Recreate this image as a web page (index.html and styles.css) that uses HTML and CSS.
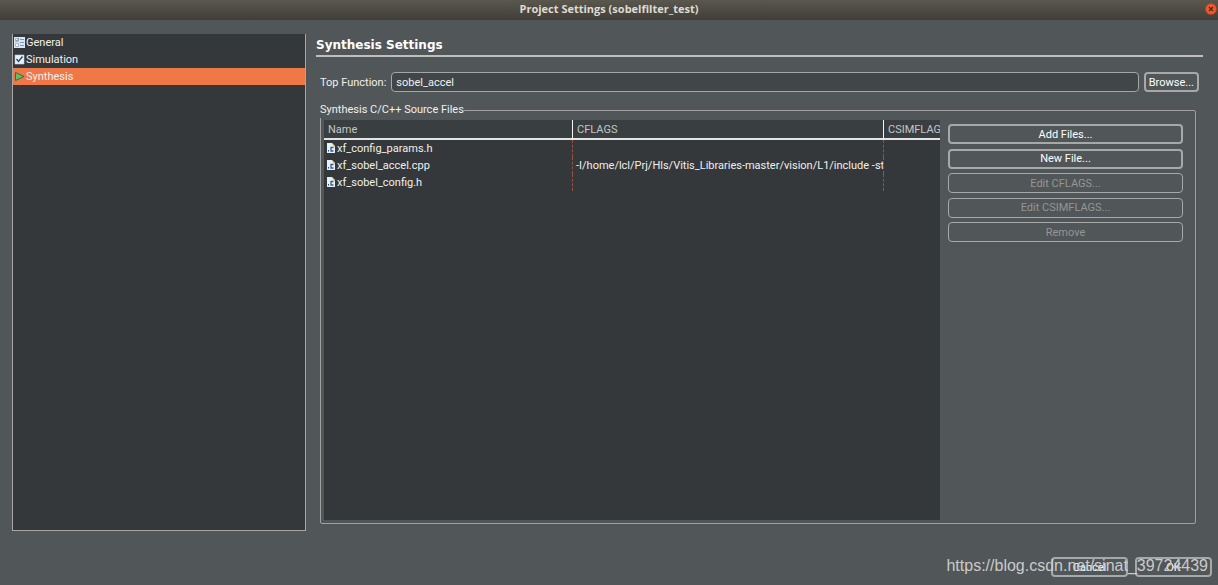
FILE: index.html
```html
<!DOCTYPE html>
<html lang="en">
<head>
<meta charset="utf-8">
<title>Project Settings (sobelfilter_test)</title>
<link rel="stylesheet" href="styles.css">
</head>
<body>
<svg class="defs" aria-hidden="true">
  <symbol id="c-file" viewBox="0 0 8 10">
    <path d="M0 0h5l3 3v7H0z" fill="#e9f0f7"/>
    <path d="M4.500 0h.5l3 3v1.500z" fill="#d9a84a"/>
    <path d="M1 7h1v1.500H1z" fill="#234f82"/>
    <path d="M6.500 4.500H4v3.500h2.500" fill="none" stroke="#2d6299" stroke-width="1.300"/>
  </symbol>
</svg>
<header class="titlebar">
  <h1 class="titlebar-text">Project Settings (sobelfilter_test)</h1>
  <button class="close" type="button" aria-label="Close">
    <svg viewBox="0 0 12 12" width="12" height="12"><circle cx="6" cy="6" r="5.5" fill="#f0592b" stroke="#b8401e" stroke-width=".6"/><path d="M4 4l4 4M8 4l-4 4" stroke="#4b2519" stroke-width="1.2"/></svg>
  </button>
</header>
<main class="dialog">
  <nav class="sidebar">
    <a class="nav-item" href="#general">
      <svg class="nav-icon" viewBox="0 0 11 11"><path d="M0 0h11v11H0z" fill="#dbe6f0"/><path d="M1.500 1.500h3v3h-3zM1.500 6.500h3v3h-3z" fill="#f5f9fc" stroke="#8fa9c2" stroke-width=".8"/><path d="M2 3l1 1 2-3M6 2.500h4M6 5.500h4M6 8.500h4" fill="none" stroke="#6583a5" stroke-width=".8"/></svg>
      <span class="nav-label">General</span></a>
    <a class="nav-item" href="#simulation">
      <svg class="nav-icon" viewBox="0 0 11 11"><path d="M1 1h9v9H1z" fill="#e9f2fa" stroke="#b9cbe0" stroke-width=".6"/><path d="M2.500 5l2 2.500 4-5" fill="none" stroke="#26466e" stroke-width="1.400"/></svg>
      <span class="nav-label">Simulation</span></a>
    <a class="nav-item selected" href="#synthesis" aria-current="page">
      <svg class="nav-icon" viewBox="0 0 11 11"><path d="M1.500 1.500l8.500 4-8.500 4z" fill="#6cba63" stroke="#24743c"/></svg>
      <span class="nav-label">Synthesis</span></a>
  </nav>
  <section class="content">
    <h2 class="heading">Synthesis Settings</h2>
    <div class="panel">
      <div class="field">
        <label for="top">Top Function:</label>
        <input class="text-input" id="top" type="text" value="sobel_accel">
        <button class="btn" type="button">Browse...</button>
      </div>
      <fieldset class="group">
        <legend>Synthesis C/C++ Source Files</legend>
        <div class="group-body">
          <div class="table-view">
            <table class="files">
              <colgroup><col class="col-name"><col class="col-cflags"><col></colgroup>
              <thead><tr><th>Name</th><th>CFLAGS</th><th>CSIMFLAGS</th></tr></thead>
              <tbody>
                <tr><td><svg class="file-icon"><use href="#c-file"/></svg>xf_config_params.h</td><td></td><td></td></tr>
                <tr><td><svg class="file-icon"><use href="#c-file"/></svg>xf_sobel_accel.cpp</td><td>-I/home/lcl/Prj/Hls/Vitis_Libraries-master/vision/L1/include -std=c++0x</td><td></td></tr>
                <tr><td><svg class="file-icon"><use href="#c-file"/></svg>xf_sobel_config.h</td><td></td><td></td></tr>
              </tbody>
            </table>
          </div>
          <div class="actions">
            <button class="btn" type="button">Add Files...</button>
            <button class="btn" type="button">New File...</button>
            <button class="btn" type="button" disabled>Edit CFLAGS...</button>
            <button class="btn" type="button" disabled>Edit CSIMFLAGS...</button>
            <button class="btn" type="button" disabled>Remove</button>
          </div>
        </div>
      </fieldset>
    </div>
  </section>
</main>
<footer class="footer">
  <button class="btn" type="button">Cancel</button>
  <button class="btn" type="button">OK</button>
  <span class="watermark">https://blog.csdn.net/sinat_39724439</span>
</footer>
</body>
</html>
```
FILE: styles.css
```css
* { box-sizing: border-box; }
body {
  margin: 0;
  min-height: 100vh;
  display: flex;
  flex-direction: column;
  background: #515658;
  color: #f0f0ee;
  font: 11px/16px Roboto, "Open Sans", sans-serif;
}
button, input { font: inherit; color: inherit; }
.defs { position: absolute; width: 0; height: 0; }
.titlebar {
  display: grid;
  grid-template-columns: 1fr auto 1fr;
  align-items: center;
  height: 20px;
  padding-bottom: 2px;
  background: linear-gradient(#5a574e, #403e39);
}
.titlebar-text {
  grid-column: 2;
  margin: 0;
  font: bold 11px/16px "Open Sans", sans-serif;
  color: #dfdbd2;
}
.close {
  justify-self: end;
  display: flex;
  margin-right: 1px;
  padding: 0;
  border: 0;
  background: none;
}
.dialog {
  flex: 1;
  display: flex;
  gap: 10px;
  padding: 14px 15px 0 12px;
}
.sidebar {
  flex: 0 0 294px;
  border: 1px solid #a8a7a3;
  border-top: 0;
  background: #35383a;
}
.nav-item {
  display: flex;
  align-items: center;
  gap: 1px;
  height: 17px;
  padding-left: 1px;
  color: #f0f0ee;
  text-decoration: none;
}
.nav-icon { width: 11px; height: 11px; }
.nav-label { padding-top: 1px; }
.selected { background: #f07746; }
.content {
  flex: 1;
  min-width: 0;
  display: flex;
  flex-direction: column;
}
.heading {
  margin: 0;
  padding: 3px 0 2px;
  border-bottom: 2px solid #bfbebd;
  font: bold 12px/16px "DejaVu Sans", sans-serif;
  color: #fff;
}
.panel {
  flex: 1;
  display: flex;
  flex-direction: column;
  gap: 10px;
  padding: 15px 7px 7px 4px;
}
.field {
  display: flex;
  align-items: center;
  gap: 5px;
  margin-right: -3px;
}
.field label { padding-top: 2px; }
.text-input {
  flex: 1;
  min-width: 0;
  height: 20px;
  padding: 0 4px;
  border: 1px solid #a5a7a6;
  border-radius: 4px;
  background: #414648;
}
.btn {
  height: 20px;
  padding: 1px 3px 0;
  border: 2px solid #a6a9a7;
  border-radius: 4px;
  background: #515658;
  line-height: 14px;
  color: #fff;
}
.btn:disabled { border-width: 1px; color: #949692; }
.group {
  flex: 1;
  display: flex;
  flex-direction: column;
  min-width: 0;
  margin: 0;
  padding: 2px 12px 3px 3px;
  border: 1px solid #a0a19e;
  border-radius: 2px;
}
.group legend { margin-left: -4px; padding: 0; }
.group-body {
  flex: 1;
  display: flex;
  gap: 8px;
}
.table-view {
  flex: 1;
  min-width: 0;
  background: #35383a;
  overflow: hidden;
}
.files {
  width: 100%;
  table-layout: fixed;
  border-collapse: separate;
  border-spacing: 0;
}
.col-name { width: 249px; }
.col-cflags { width: 311px; }
.files th, .files td {
  overflow: hidden;
  white-space: nowrap;
  text-align: left;
  line-height: 16px;
}
.files th {
  height: 20px;
  padding: 2px 4px 0;
  border-bottom: 2px solid #e4e4e4;
  border-right: 1px solid #f4f4f4;
  background: #393e40;
  font-weight: 400;
  color: #c5c6c4;
}
.files td {
  height: 17px;
  padding: 1px 0 0 3px;
  border-right: 1px dashed #96533d;
}
.files th:last-child, .files td:last-child { border-right: 0; }
.file-icon {
  width: 8px;
  height: 10px;
  margin-right: 2px;
  vertical-align: -1px;
}
.actions {
  flex: 0 0 235px;
  display: flex;
  flex-direction: column;
  justify-content: space-between;
  height: 122px;
  padding-top: 4px;
}
.footer {
  position: relative;
  display: flex;
  justify-content: flex-end;
  gap: 7px;
  padding: 26px 6px 8px;
}
.footer .btn { width: 77px; }
.watermark {
  position: absolute;
  right: 10px;
  bottom: 9px;
  font: 16px/20px "Liberation Sans", Arial, sans-serif;
  color: #c9cbcb;
  pointer-events: none;
}
```
